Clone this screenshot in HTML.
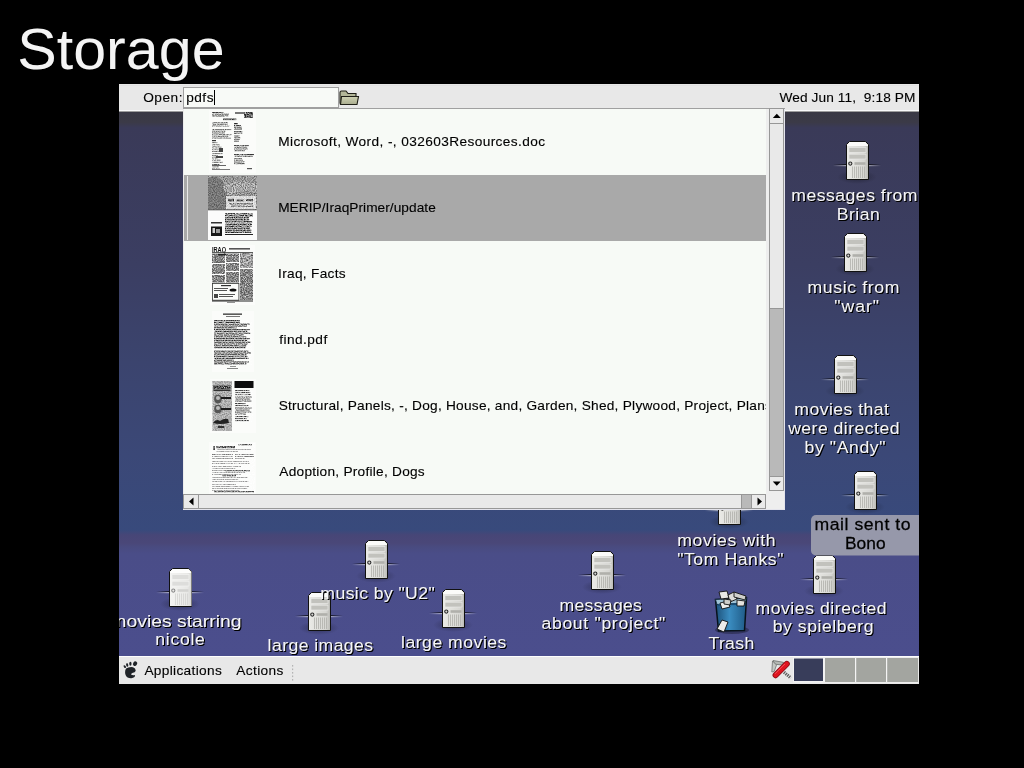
<!DOCTYPE html>
<html><head><meta charset="utf-8"><title>Storage</title>
<style>html,body{margin:0;padding:0;background:#000;width:1024px;height:768px;overflow:hidden}svg{display:block}text{font-family:"Liberation Sans",sans-serif;white-space:pre}</style>
</head><body>
<svg width="1024" height="768" viewBox="0 0 1024 768" font-family="Liberation Sans, sans-serif"><defs>
<linearGradient id="bg" x1="0" y1="112" x2="0" y2="656" gradientUnits="userSpaceOnUse">
 <stop offset="0" stop-color="#3a3945"/>
 <stop offset="0.019" stop-color="#3b3a47"/>
 <stop offset="0.029" stop-color="#3a3a58"/>
 <stop offset="0.28" stop-color="#3b3e62"/>
 <stop offset="0.46" stop-color="#3b446e"/>
 <stop offset="0.63" stop-color="#3b4877"/>
 <stop offset="0.7684" stop-color="#384a7c"/>
 <stop offset="0.7776" stop-color="#474677"/>
 <stop offset="0.7923" stop-color="#4a4778"/>
 <stop offset="0.7996" stop-color="#494b80"/>
 <stop offset="0.8125" stop-color="#4a4d88"/>
 <stop offset="1" stop-color="#4b4e8d"/>
</linearGradient>
<linearGradient id="srvline" x1="0" x2="1" y1="0" y2="0">
 <stop offset="0" stop-color="#fff" stop-opacity="0"/>
 <stop offset="0.4" stop-color="#fff" stop-opacity="0.85"/>
 <stop offset="0.6" stop-color="#fff" stop-opacity="0.85"/>
 <stop offset="1" stop-color="#fff" stop-opacity="0"/>
</linearGradient>
<linearGradient id="srvlined" x1="0" x2="1" y1="0" y2="0">
 <stop offset="0" stop-color="#000" stop-opacity="0"/>
 <stop offset="0.3" stop-color="#000" stop-opacity="0.8"/>
 <stop offset="0.7" stop-color="#000" stop-opacity="0.8"/>
 <stop offset="1" stop-color="#000" stop-opacity="0"/>
</linearGradient>
<linearGradient id="srvbody" x1="0" x2="1" y1="0" y2="0">
 <stop offset="0" stop-color="#ebebe7"/>
 <stop offset="0.8" stop-color="#d6d6d2"/>
 <stop offset="1" stop-color="#b8b8b3"/>
</linearGradient>
<radialGradient id="srvshadow">
 <stop offset="0" stop-color="#000" stop-opacity="0.35"/>
 <stop offset="1" stop-color="#000" stop-opacity="0"/>
</radialGradient>
<g id="srv">
 <ellipse cx="24" cy="36" rx="20" ry="7" fill="url(#srvshadow)"/>
 <rect x="0" y="23" width="48" height="1.1" fill="url(#srvlined)"/>
 <rect x="0" y="24.1" width="48" height="1.1" fill="url(#srvline)"/>
 <path d="M13.5,3.5 L16.5,0.5 L32.5,0.5 L35.5,3.5 L35.5,38.5 L13.5,38.5 Z" fill="url(#srvbody)" stroke="#111" stroke-width="1"/>
 <path d="M14,4 L17,1 L32,1 L35,4 L35,5 L14,5 Z" fill="#fbfbf9"/>
 <rect x="16" y="6.6" width="17" height="4.8" fill="#c2c2bd" stroke="#ecece9" stroke-width="0.6"/>
 <rect x="16" y="13.2" width="17" height="4.8" fill="#c2c2bd" stroke="#ecece9" stroke-width="0.6"/>
 <circle cx="17.3" cy="22.6" r="1.6" fill="#d8d8d4" stroke="#2a2a2a" stroke-width="1.1"/>
 <rect x="21.5" y="21.2" width="11" height="2.6" fill="#b0b0ab"/>
 <g stroke="#b0b0ab" stroke-width="0.8">
  <line x1="19.5" y1="25.5" x2="19.5" y2="37"/><line x1="21.5" y1="25.5" x2="21.5" y2="37"/>
  <line x1="23.5" y1="25.5" x2="23.5" y2="37"/><line x1="25.5" y1="25.5" x2="25.5" y2="37"/>
  <line x1="27.5" y1="25.5" x2="27.5" y2="37"/><line x1="29.5" y1="25.5" x2="29.5" y2="37"/>
  <line x1="31.5" y1="25.5" x2="31.5" y2="37"/>
 </g>
</g>
<filter id="blur" x="-5%" y="-5%" width="110%" height="110%"><feGaussianBlur stdDeviation="0.35"/></filter>
<filter id="mot" x="0" y="0" width="1" height="1" filterUnits="objectBoundingBox" color-interpolation-filters="sRGB">
 <feTurbulence type="fractalNoise" baseFrequency="0.9" numOctaves="1" seed="7" result="n"/>
 <feColorMatrix in="n" type="matrix" values="0 0 0 0 0  0 0 0 0 0  0 0 0 0 0  2.2 0 0 0 -0.85" result="a"/>
 <feComposite in="SourceGraphic" in2="a" operator="in"/>
</filter><filter id="mot2" x="0" y="0" width="1" height="1" filterUnits="objectBoundingBox" color-interpolation-filters="sRGB">
 <feTurbulence type="fractalNoise" baseFrequency="0.6" numOctaves="2" seed="11" result="n"/>
 <feColorMatrix in="n" type="matrix" values="0 0 0 0 0  0 0 0 0 0  0 0 0 0 0  2.2 0 0 0 -0.75" result="a"/>
 <feComposite in="SourceGraphic" in2="a" operator="in"/>
</filter><filter id="mot3" x="0" y="0" width="1" height="1" filterUnits="objectBoundingBox" color-interpolation-filters="sRGB">
 <feTurbulence type="fractalNoise" baseFrequency="0.9" numOctaves="1" seed="5" result="n"/>
 <feColorMatrix in="n" type="matrix" values="0 0 0 0 0  0 0 0 0 0  0 0 0 0 0  2.0 0 0 0 -0.7" result="a"/>
 <feComposite in="SourceGraphic" in2="a" operator="in"/>
</filter>
<filter id="tsh" x="-5%" y="-5%" width="110%" height="110%" color-interpolation-filters="sRGB">
 <feGaussianBlur in="SourceAlpha" stdDeviation="0.6"/>
 <feOffset dx="0.9" dy="0.9"/>
 <feComponentTransfer><feFuncA type="linear" slope="1.2"/></feComponentTransfer>
 <feMerge><feMergeNode/><feMergeNode in="SourceGraphic"/></feMerge>
</filter>
<filter id="gray" x="-0.1" y="-0.3" width="1.2" height="1.6"><feOffset dx="0" dy="0"/></filter>
<linearGradient id="trashg" x1="0" x2="1" y1="0" y2="0">
 <stop offset="0" stop-color="#1c4f78"/><stop offset="0.45" stop-color="#3a8cc0"/><stop offset="1" stop-color="#1f5a86"/>
</linearGradient>
<linearGradient id="foldg" x1="0" x2="0" y1="0" y2="1"><stop offset="0" stop-color="#cfd2b4"/><stop offset="1" stop-color="#a9ac8e"/></linearGradient>
<clipPath id="desk"><rect x="119" y="112" width="800" height="544"/></clipPath>
<clipPath id="listclip"><rect x="184" y="109" width="582" height="385"/></clipPath>
</defs>
<text transform="scale(1.0205,1)" x="16.95" y="69.00" font-size="58" textLength="203.14" lengthAdjust="spacing" fill="#f4f4f4"  filter="url(#gray)">Storage</text>
<rect x="119" y="112" width="800" height="544" fill="url(#bg)"/>
<g clip-path="url(#desk)">
<use href="#srv" x="833" y="141"/>
<use href="#srv" x="831" y="233"/>
<use href="#srv" x="821" y="355"/>
<use href="#srv" x="841" y="471"/>
<use href="#srv" x="705" y="486"/>
<use href="#srv" x="578" y="551"/>
<use href="#srv" x="800" y="555"/>
<use href="#srv" x="156" y="568"/>
<use href="#srv" x="352" y="540"/>
<use href="#srv" x="295" y="592"/>
<use href="#srv" x="429" y="589"/>
<path d="M170,572 L173,569 L189,569 L192,572 L192,606 L170,606 Z" fill="#fff" fill-opacity="0.45"/>
<g transform="translate(708,586)">
 <ellipse cx="24" cy="44" rx="17" ry="4" fill="#000" fill-opacity="0.3"/>
 <path d="M7.5,13.5 L38.5,12 L36.5,44.5 L10.5,45 Z" fill="url(#trashg)" stroke="#08131c" stroke-width="1.5"/>
 <path d="M7.5,13.5 L38.5,12 L37,17 L9,18.5 Z" fill="#9fc3d6" stroke="#0d2438" stroke-width="0.8"/>
 <path d="M10,18 L36,16.5 L36,18.5 L10,20 Z" fill="#1d4f74"/>
 <path d="M11,6 L19,5 L21,12 L13,13 Z" fill="#e9e9e6" stroke="#111" stroke-width="0.9"/>
 <path d="M20,9 L26,6 L29,13 L22,16 Z" fill="#dcdcd8" stroke="#111" stroke-width="0.9"/>
 <path d="M26,6 L38,10 L37,14 L26,11 Z" fill="#d0d0cc" stroke="#111" stroke-width="0.9"/>
 <path d="M12,17 L20,15 L22,21 L14,23 Z" fill="#ececea" stroke="#111" stroke-width="0.9"/>
 <path d="M29,14 L37,15 L36,20 L29,20 Z" fill="#e4e4e0" stroke="#111" stroke-width="0.9"/>
 <path d="M16,13 L23,14 L22,19 L16,18 Z" fill="#cfcfcb" stroke="#111" stroke-width="0.9"/>
 <path d="M9,43 L14,34 L20,36 L16,46 Z" fill="#ececea" stroke="#111" stroke-width="0.9"/>
</g>
<g filter="url(#tsh)">
<text transform="scale(1.0700,1)" x="739.55" y="201.00" font-size="16.5" textLength="117.89" lengthAdjust="spacing" fill="#f6f6f8" stroke="#f6f6f8" stroke-width="0.08" >messages from</text>
<text transform="scale(1.0700,1)" x="782.01" y="219.90" font-size="16.5" textLength="40.18" lengthAdjust="spacing" fill="#f6f6f8" stroke="#f6f6f8" stroke-width="0.08" >Brian</text>
<text transform="scale(1.0700,1)" x="754.60" y="292.80" font-size="16.5" textLength="86.00" lengthAdjust="spacing" fill="#f6f6f8" stroke="#f6f6f8" stroke-width="0.08" >music from</text>
<text transform="scale(1.0700,1)" x="779.58" y="312.20" font-size="16.5" textLength="42.05" lengthAdjust="spacing" fill="#f6f6f8" stroke="#f6f6f8" stroke-width="0.08" >"war"</text>
<text transform="scale(1.0700,1)" x="742.36" y="415.00" font-size="16.5" textLength="88.46" lengthAdjust="spacing" fill="#f6f6f8" stroke="#f6f6f8" stroke-width="0.08" >movies that</text>
<text transform="scale(1.0700,1)" x="736.59" y="433.70" font-size="16.5" textLength="104.04" lengthAdjust="spacing" fill="#f6f6f8" stroke="#f6f6f8" stroke-width="0.08" >were directed</text>
<text transform="scale(1.0700,1)" x="751.94" y="452.80" font-size="16.5" textLength="75.66" lengthAdjust="spacing" fill="#f6f6f8" stroke="#f6f6f8" stroke-width="0.08" >by "Andy"</text>
<text transform="scale(1.0700,1)" x="632.92" y="545.80" font-size="16.5" textLength="92.00" lengthAdjust="spacing" fill="#f6f6f8" stroke="#f6f6f8" stroke-width="0.08" >movies with</text>
<text transform="scale(1.0700,1)" x="632.85" y="564.90" font-size="16.5" textLength="99.33" lengthAdjust="spacing" fill="#f6f6f8" stroke="#f6f6f8" stroke-width="0.08" >"Tom Hanks"</text>
<text transform="scale(1.0700,1)" x="522.83" y="610.80" font-size="16.5" textLength="77.12" lengthAdjust="spacing" fill="#f6f6f8" stroke="#f6f6f8" stroke-width="0.08" >messages</text>
<text transform="scale(1.0700,1)" x="506.03" y="629.50" font-size="16.5" textLength="115.71" lengthAdjust="spacing" fill="#f6f6f8" stroke="#f6f6f8" stroke-width="0.08" >about "project"</text>
<text transform="scale(1.0700,1)" x="706.00" y="613.70" font-size="16.5" textLength="122.57" lengthAdjust="spacing" fill="#f6f6f8" stroke="#f6f6f8" stroke-width="0.08" >movies directed</text>
<text transform="scale(1.0700,1)" x="722.22" y="632.20" font-size="16.5" textLength="94.18" lengthAdjust="spacing" fill="#f6f6f8" stroke="#f6f6f8" stroke-width="0.08" >by spielberg</text>
<text transform="scale(1.0700,1)" x="662.08" y="649.00" font-size="16.5" textLength="42.82" lengthAdjust="spacing" fill="#f6f6f8" stroke="#f6f6f8" stroke-width="0.08" >Trash</text>
<text transform="scale(1.0700,1)" x="299.37" y="599.05" font-size="16.5" textLength="106.93" lengthAdjust="spacing" fill="#f6f6f8" stroke="#f6f6f8" stroke-width="0.08" >music by "U2"</text>
<text transform="scale(1.0700,1)" x="250.11" y="651.10" font-size="16.5" textLength="98.63" lengthAdjust="spacing" fill="#f6f6f8" stroke="#f6f6f8" stroke-width="0.08" >large images</text>
<text transform="scale(1.0700,1)" x="374.79" y="648.00" font-size="16.5" textLength="98.51" lengthAdjust="spacing" fill="#f6f6f8" stroke="#f6f6f8" stroke-width="0.08" >large movies</text>
<text transform="scale(1.0700,1)" x="145.16" y="645.50" font-size="16.5" textLength="46.30" lengthAdjust="spacing" fill="#f6f6f8" stroke="#f6f6f8" stroke-width="0.08" >nicole</text>
<text x="110.37" y="626.8" font-size="16.5" textLength="131.08" lengthAdjust="spacingAndGlyphs" fill="#f6f6f8" stroke="#f6f6f8" stroke-width="0.08">movies starring</text>
</g>
<rect x="811" y="515" width="112" height="40.5" rx="5" fill="#9698aa"/>
<text transform="scale(1.0700,1)" x="761.14" y="530.10" font-size="16.5" textLength="89.90" lengthAdjust="spacing" fill="#000" stroke="#000" stroke-width="0.25" filter="url(#gray)">mail sent to</text>
<text transform="scale(1.0521,1)" x="803.17" y="548.60" font-size="16.5" textLength="38.54" lengthAdjust="spacing" fill="#000" stroke="#000" stroke-width="0.25" filter="url(#gray)">Bono</text>
</g>
<rect x="119" y="84" width="800" height="28" fill="#e8e8e8"/>
<rect x="119" y="85" width="800" height="1" fill="#e2e2e2"/>
<rect x="119" y="110" width="800" height="1" fill="#fafafa"/>
<rect x="119" y="111" width="800" height="1" fill="#9d9d9d"/>
<text transform="scale(1.0700,1)" x="133.79" y="101.70" font-size="12.8" textLength="36.72" lengthAdjust="spacing" fill="#000" stroke="#000" stroke-width="0.12"  filter="url(#gray)">Open:</text>
<rect x="183.5" y="87.5" width="155" height="20" fill="#f8faf7" stroke="#a0a0a0"/>
<text transform="scale(1.0700,1)" x="173.97" y="101.70" font-size="12.8" textLength="25.54" lengthAdjust="spacing" fill="#000" stroke="#000" stroke-width="0.12"  filter="url(#gray)">pdfs</text>
<rect x="214" y="90" width="1" height="15" fill="#000"/>
<g transform="translate(339,90)">
 <path d="M1,2.5 Q1,1 2.5,1 L7,1 L9,3.5 L17,3.5 L17,14 L2,14 Q1,14 1,13 Z" fill="#b3b698" stroke="#1e1e16" stroke-width="1.1"/>
 <path d="M2.5,6.5 L19.5,6.5 L18,14.5 L1.5,14.5 Z" fill="url(#foldg)" stroke="#1e1e16" stroke-width="1.1"/>
</g>
<text transform="scale(1.0700,1)" x="728.45" y="101.90" font-size="12.8" textLength="127.04" lengthAdjust="spacing" fill="#000" stroke="#000" stroke-width="0.12"  filter="url(#gray)">Wed Jun 11,  9:18 PM</text>
<rect x="119" y="656" width="800" height="28" fill="#e8e8e8"/>
<rect x="119" y="656" width="800" height="1" fill="#fdfdfd"/>
<text transform="scale(1.0700,1)" x="134.95" y="674.80" font-size="12.8" textLength="72.34" lengthAdjust="spacing" fill="#000" stroke="#000" stroke-width="0.12"  filter="url(#gray)">Applications</text>
<text transform="scale(1.0700,1)" x="220.75" y="674.80" font-size="12.8" textLength="44.16" lengthAdjust="spacing" fill="#000" stroke="#000" stroke-width="0.12"  filter="url(#gray)">Actions</text>
<g fill="#b4b4b4"><rect x="292" y="665" width="1.2" height="1.6"/><rect x="292" y="668.5" width="1.2" height="1.6"/><rect x="292" y="672" width="1.2" height="1.6"/><rect x="292" y="675.5" width="1.2" height="1.6"/><rect x="292" y="679" width="1.2" height="1.6"/></g>
<g fill="#1f2328">
 <ellipse cx="124.8" cy="666.6" rx="0.95" ry="1.6" transform="rotate(-35 124.8 666.6)"/>
 <ellipse cx="127.2" cy="664.9" rx="1.05" ry="1.8" transform="rotate(-15 127.2 664.9)"/>
 <ellipse cx="130.4" cy="663.8" rx="1.15" ry="2.0"/>
 <ellipse cx="135.1" cy="663.7" rx="2.0" ry="2.4" transform="rotate(35 135.1 663.7)"/>
 <path d="M126,668.6 Q129,666.6 133,667.2 Q136,668.2 135.6,671 Q135,672.6 133,672.8 Q131.6,673 131,674.6 Q132.6,675.6 135,675 Q135.4,677.6 131.4,678.2 Q127,678.4 125.6,675 Q124.4,671.6 126,668.6 Z"/>
</g>
<path d="M773,660.5 L783.5,662.3 L782.5,665 L774.5,664.2 Z" fill="#b4b8b4" stroke="#5e625e" stroke-width="0.7"/>
<path d="M772.5,661 L771.8,672 L774.2,671.5 L776.5,665 Z" fill="#c4c8c4" stroke="#666" stroke-width="0.7"/>
<path d="M784,672.2 L790.8,678" stroke="#5a5a5a" stroke-width="3.2" stroke-dasharray="1.3 0.9"/>
<path d="M775.6,675.2 L786.8,663.9" stroke="#8a0c14" stroke-width="6" stroke-linecap="round"/>
<path d="M775.6,675.2 L786.8,663.9" stroke="#e0141f" stroke-width="4.4" stroke-linecap="round"/>
<path d="M775.2,673.6 L784.6,664.2" stroke="#ff6a74" stroke-width="1" stroke-linecap="round" stroke-opacity="0.7"/>
<rect x="793" y="657.5" width="125" height="25" fill="#f2f2f2"/>
<rect x="794" y="658.5" width="29" height="22.5" fill="#383d5a"/>
<rect x="825" y="658" width="93" height="24" fill="#a3a5a0"/>
<rect x="855" y="658" width="1.2" height="24" fill="#f4f4f4"/><rect x="886" y="658" width="1.2" height="24" fill="#f4f4f4"/>
<rect x="183" y="108" width="602" height="402" fill="#f7faf6" stroke="none"/>
<rect x="183" y="108" width="602" height="1" fill="#a0a0a0"/><rect x="183" y="109" width="1" height="401" fill="#ececec"/><rect x="784" y="109" width="1" height="401" fill="#e4e4ec"/><rect x="183" y="509" width="602" height="1" fill="#e4e4ec"/>
<rect x="184" y="175" width="582" height="66" fill="#a9a9a9"/>
<rect x="187" y="176" width="1" height="64" fill="#e8e8e8"/>
<g clip-path="url(#listclip)">
<text transform="scale(1.0700,1)" x="259.98" y="146.00" font-size="12.8" textLength="249.44" lengthAdjust="spacing" fill="#000" stroke="#000" stroke-width="0.12"  filter="url(#gray)">Microsoft, Word, -, 032603Resources.doc</text>
<text transform="scale(1.0700,1)" x="259.98" y="212.00" font-size="12.8" textLength="147.29" lengthAdjust="spacing" fill="#000" stroke="#000" stroke-width="0.12"  filter="url(#gray)">MERIP/IraqPrimer/update</text>
<text transform="scale(1.0700,1)" x="259.88" y="278.00" font-size="12.8" textLength="63.20" lengthAdjust="spacing" fill="#000" stroke="#000" stroke-width="0.12"  filter="url(#gray)">Iraq, Facts</text>
<text transform="scale(1.0700,1)" x="260.88" y="344.00" font-size="12.8" textLength="44.95" lengthAdjust="spacing" fill="#000" stroke="#000" stroke-width="0.12"  filter="url(#gray)">find.pdf</text>
<text transform="scale(1.0700,1)" x="260.43" y="410.00" font-size="12.8" textLength="460.93" lengthAdjust="spacing" fill="#000" stroke="#000" stroke-width="0.12"  filter="url(#gray)">Structural, Panels, -, Dog, House, and, Garden, Shed, Plywood, Project, Plans</text>
<text transform="scale(1.0700,1)" x="261.03" y="476.00" font-size="12.8" textLength="135.89" lengthAdjust="spacing" fill="#000" stroke="#000" stroke-width="0.12"  filter="url(#gray)">Adoption, Profile, Dogs</text>
<g filter="url(#blur)"><rect x="209.0" y="110.0" width="47.0" height="63.0" fill="#fbfcfa"/>
<rect x="212.0" y="112.0" width="11.8" height="1.1" fill="#333"/>
<rect x="212.0" y="113.7" width="16.9" height="1.1" fill="#333"/>
<rect x="212.0" y="115.4" width="16.3" height="1.1" fill="#333"/>
<rect x="212.0" y="112.0" width="18.0" height="5.5" fill="#fbfcfa" filter="url(#mot3)"/>
<rect x="235.0" y="112.0" width="10.0" height="2.0" fill="#777"/>
<rect x="244.0" y="112.0" width="9.0" height="6.0" fill="#222"/>
<rect x="244.0" y="112.0" width="9.0" height="6.0" fill="#fff" filter="url(#mot3)"/>
<rect x="223.0" y="118.5" width="13.3" height="1.6" fill="#222"/>
<rect x="223.0" y="118.5" width="19.0" height="2.0" fill="#fbfcfa" filter="url(#mot3)"/>
<rect x="212.0" y="122.0" width="16.0" height="1.1" fill="#555"/>
<rect x="212.0" y="123.7" width="15.6" height="1.1" fill="#555"/>
<rect x="212.0" y="125.4" width="17.2" height="1.1" fill="#555"/>
<rect x="212.0" y="122.0" width="20.0" height="5.0" fill="#fbfcfa" filter="url(#mot3)"/>
<rect x="212.0" y="129.0" width="19.2" height="1.1" fill="#555"/>
<rect x="212.0" y="130.7" width="13.4" height="1.1" fill="#555"/>
<rect x="212.0" y="132.4" width="12.8" height="1.1" fill="#555"/>
<rect x="212.0" y="134.1" width="19.6" height="1.1" fill="#555"/>
<rect x="212.0" y="135.8" width="16.2" height="1.1" fill="#555"/>
<rect x="212.0" y="137.5" width="19.0" height="1.1" fill="#555"/>
<rect x="212.0" y="129.0" width="21.0" height="10.0" fill="#fbfcfa" filter="url(#mot3)"/>
<rect x="212.0" y="140.0" width="4.0" height="1.2" fill="#333"/>
<rect x="212.0" y="142.0" width="5.5" height="1.1" fill="#555"/>
<rect x="212.0" y="144.2" width="7.9" height="1.1" fill="#555"/>
<rect x="212.0" y="146.4" width="9.5" height="1.1" fill="#555"/>
<rect x="212.0" y="148.6" width="6.8" height="1.1" fill="#555"/>
<rect x="212.0" y="150.8" width="10.7" height="1.1" fill="#555"/>
<rect x="212.0" y="153.0" width="10.5" height="1.1" fill="#555"/>
<rect x="212.0" y="155.2" width="5.7" height="1.1" fill="#555"/>
<rect x="212.0" y="157.4" width="5.6" height="1.1" fill="#555"/>
<rect x="212.0" y="159.6" width="8.5" height="1.1" fill="#555"/>
<rect x="212.0" y="161.8" width="10.7" height="1.1" fill="#555"/>
<rect x="212.0" y="164.0" width="7.6" height="1.1" fill="#555"/>
<rect x="212.0" y="166.2" width="6.7" height="1.1" fill="#555"/>
<rect x="212.0" y="168.4" width="7.8" height="1.1" fill="#555"/>
<rect x="212.0" y="142.0" width="11.0" height="28.0" fill="#fbfcfa" filter="url(#mot3)"/>
<rect x="219.0" y="148.0" width="4.0" height="4.0" fill="#444"/>
<rect x="216.0" y="156.0" width="7.0" height="2.0" fill="#444"/>
<rect x="212.0" y="165.0" width="14.0" height="1.0" fill="#666"/>
<rect x="212.0" y="169.0" width="18.0" height="1.0" fill="#777"/>
<rect x="234.0" y="123.0" width="3.7" height="1.3" fill="#222"/>
<rect x="234.0" y="123.0" width="6.0" height="1.5" fill="#fbfcfa" filter="url(#mot3)"/>
<rect x="234.0" y="125.0" width="6.9" height="1.1" fill="#333"/>
<rect x="234.0" y="126.7" width="7.8" height="1.1" fill="#333"/>
<rect x="234.0" y="128.4" width="8.0" height="1.1" fill="#333"/>
<rect x="234.0" y="125.0" width="10.0" height="4.0" fill="#fbfcfa" filter="url(#mot3)"/>
<rect x="234.0" y="131.0" width="8.3" height="1.1" fill="#333"/>
<rect x="234.0" y="132.7" width="8.3" height="1.1" fill="#333"/>
<rect x="234.0" y="131.0" width="12.0" height="3.0" fill="#fbfcfa" filter="url(#mot3)"/>
<rect x="234.0" y="135.5" width="5.5" height="1.1" fill="#444"/>
<rect x="234.0" y="137.2" width="6.3" height="1.1" fill="#444"/>
<rect x="234.0" y="138.9" width="5.7" height="1.1" fill="#444"/>
<rect x="234.0" y="140.6" width="4.9" height="1.1" fill="#444"/>
<rect x="234.0" y="135.5" width="8.0" height="6.0" fill="#fbfcfa" filter="url(#mot3)"/>
<rect x="234.0" y="145.0" width="15.0" height="1.1" fill="#444"/>
<rect x="234.0" y="146.7" width="13.2" height="1.1" fill="#444"/>
<rect x="234.0" y="148.4" width="13.7" height="1.1" fill="#444"/>
<rect x="234.0" y="150.1" width="10.8" height="1.1" fill="#444"/>
<rect x="234.0" y="145.0" width="16.0" height="7.0" fill="#fbfcfa" filter="url(#mot3)"/>
<rect x="234.0" y="154.0" width="19.9" height="1.1" fill="#333"/>
<rect x="234.0" y="155.7" width="18.9" height="1.1" fill="#333"/>
<rect x="234.0" y="154.0" width="20.0" height="3.0" fill="#fbfcfa" filter="url(#mot3)"/>
<rect x="234.0" y="158.0" width="7.8" height="1.1" fill="#444"/>
<rect x="234.0" y="159.7" width="8.8" height="1.1" fill="#444"/>
<rect x="234.0" y="161.4" width="10.7" height="1.1" fill="#444"/>
<rect x="234.0" y="163.1" width="10.6" height="1.1" fill="#444"/>
<rect x="234.0" y="158.0" width="12.0" height="7.0" fill="#fbfcfa" filter="url(#mot3)"/>
<rect x="247.0" y="168.0" width="5.0" height="1.2" fill="#555"/>
<rect x="208.0" y="176.0" width="49.0" height="64.0" fill="#fbfbfb"/>
<rect x="208.0" y="176.0" width="49.0" height="34.0" fill="#b8b8b8"/>
<path d="M208,178 L214,176 L222,180 L230,196 L226,210 L208,210 Z" fill="#8e8e8e"/>
<path d="M222,186 Q236,178 257,184 L257,192 Q240,188 228,196 Z" fill="#d0d0d0"/>
<rect x="208.0" y="176.0" width="49.0" height="34.0" fill="#444" filter="url(#mot3)"/>
<rect x="226.0" y="196.0" width="30.0" height="13.0" fill="#cdcdcd"/>
<rect x="228.0" y="198.8" width="6.0" height="2.6" fill="#1a1a1a"/>
<rect x="236.0" y="199.5" width="8.0" height="1.8" fill="#222"/>
<rect x="246.0" y="199.0" width="7.0" height="2.2" fill="#222"/>
<rect x="229.0" y="203.2" width="24.0" height="1.3" fill="#444"/>
<rect x="231.0" y="205.6" width="22.0" height="1.3" fill="#555"/>
<rect x="226.0" y="196.0" width="30.0" height="13.0" fill="#fff" filter="url(#mot3)"/>
<rect x="208.0" y="209.5" width="49.0" height="0.8" fill="#555"/>
<rect x="225.0" y="213.0" width="27.8" height="1.5" fill="#1a1a1a"/>
<rect x="225.0" y="215.0" width="27.8" height="1.5" fill="#1a1a1a"/>
<rect x="225.0" y="217.0" width="24.0" height="1.5" fill="#1a1a1a"/>
<rect x="225.0" y="219.0" width="24.2" height="1.5" fill="#1a1a1a"/>
<rect x="225.0" y="221.0" width="27.3" height="1.5" fill="#1a1a1a"/>
<rect x="225.0" y="223.5" width="26.9" height="1.5" fill="#1a1a1a"/>
<rect x="225.0" y="225.5" width="26.6" height="1.5" fill="#1a1a1a"/>
<rect x="225.0" y="227.5" width="25.1" height="1.5" fill="#1a1a1a"/>
<rect x="225.0" y="229.5" width="26.3" height="1.5" fill="#1a1a1a"/>
<rect x="225.0" y="231.5" width="26.3" height="1.5" fill="#1a1a1a"/>
<rect x="225.0" y="213.0" width="28.0" height="20.0" fill="#fff" filter="url(#mot3)"/>
<rect x="225.0" y="234.0" width="28.0" height="1.0" fill="#222"/>
<rect x="211.0" y="222.0" width="11.0" height="1.5" fill="#333"/>
<rect x="211.0" y="226.5" width="11.0" height="9.5" fill="#151515"/>
<rect x="212.5" y="228.0" width="2.5" height="5.0" fill="#cfcfcf"/>
<rect x="216.0" y="229.0" width="4.0" height="4.0" fill="#999"/>
<rect x="210.0" y="245.0" width="45.0" height="60.0" fill="#fbfcfa"/>
<text x="212" y="251.6" font-size="7" font-weight="bold" textLength="14" lengthAdjust="spacingAndGlyphs" fill="#111">IRAQ</text>
<rect x="229.0" y="248.0" width="21.0" height="1.6" fill="#555"/>
<rect x="212.0" y="252.0" width="41.0" height="0.8" fill="#333"/>
<rect x="212.0" y="253.5" width="13.0" height="29.0" fill="#5a5a5a"/>
<rect x="226.0" y="253.5" width="13.0" height="29.0" fill="#5a5a5a"/>
<rect x="240.0" y="269.0" width="13.0" height="31.0" fill="#5a5a5a"/>
<rect x="212.0" y="253.5" width="13.0" height="29.0" fill="#fff" filter="url(#mot)"/>
<rect x="226.0" y="253.5" width="13.0" height="29.0" fill="#fff" filter="url(#mot)"/>
<rect x="240.0" y="269.0" width="13.0" height="31.0" fill="#fff" filter="url(#mot)"/>
<rect x="218.0" y="254.0" width="8.0" height="1.3" fill="#222"/>
<rect x="212.0" y="263.0" width="13.0" height="1.0" fill="#fff"/>
<rect x="226.0" y="262.0" width="13.0" height="1.0" fill="#fff"/>
<rect x="226.0" y="271.0" width="13.0" height="1.0" fill="#fff"/>
<rect x="212.0" y="274.0" width="13.0" height="1.0" fill="#fff"/>
<rect x="240.0" y="253.0" width="13.0" height="15.0" fill="#d0d0d0"/>
<rect x="240.0" y="253.0" width="13.0" height="15.0" fill="#444" filter="url(#mot2)"/>
<rect x="212.0" y="283.0" width="27.0" height="0.8" fill="#333"/>
<rect x="212.0" y="299.8" width="27.0" height="0.8" fill="#333"/>
<rect x="212.0" y="283.0" width="0.8" height="17.0" fill="#333"/>
<rect x="238.5" y="283.0" width="0.8" height="17.0" fill="#333"/>
<rect x="221.0" y="285.0" width="10.0" height="1.2" fill="#333"/>
<rect x="214.0" y="288.0" width="14.0" height="1.0" fill="#555"/>
<rect x="214.0" y="290.0" width="13.0" height="1.0" fill="#555"/>
<rect x="214.0" y="294.0" width="4.0" height="4.0" fill="#444"/>
<rect x="219.0" y="294.0" width="16.0" height="1.0" fill="#555"/>
<rect x="219.0" y="296.0" width="14.0" height="1.0" fill="#555"/>
<ellipse cx="233" cy="290" rx="3.5" ry="1.6" fill="#111"/>
<rect x="212.0" y="300.5" width="41.0" height="1.0" fill="#222"/>
<rect x="227.0" y="302.0" width="8.0" height="0.8" fill="#777"/>
<rect x="212.0" y="311.0" width="42.0" height="61.0" fill="#fbfcfa"/>
<rect x="223.0" y="313.5" width="19.0" height="1.3" fill="#333"/>
<rect x="226.0" y="316.0" width="14.0" height="1.0" fill="#777"/>
<rect x="214.0" y="320.0" width="25.8" height="1.2" fill="#2a2a2a"/>
<rect x="214.0" y="321.8" width="25.9" height="1.2" fill="#2a2a2a"/>
<rect x="214.0" y="323.6" width="35.7" height="1.2" fill="#2a2a2a"/>
<rect x="214.0" y="325.4" width="33.0" height="1.2" fill="#2a2a2a"/>
<rect x="214.0" y="327.2" width="22.5" height="1.2" fill="#2a2a2a"/>
<rect x="214.0" y="329.0" width="35.9" height="1.2" fill="#2a2a2a"/>
<rect x="214.0" y="330.8" width="33.2" height="1.2" fill="#2a2a2a"/>
<rect x="214.0" y="332.6" width="36.2" height="1.2" fill="#2a2a2a"/>
<rect x="214.0" y="334.4" width="29.7" height="1.2" fill="#2a2a2a"/>
<rect x="214.0" y="336.2" width="32.4" height="1.2" fill="#2a2a2a"/>
<rect x="214.0" y="338.0" width="35.8" height="1.2" fill="#2a2a2a"/>
<rect x="214.0" y="339.8" width="33.1" height="1.2" fill="#2a2a2a"/>
<rect x="214.0" y="341.6" width="36.3" height="1.2" fill="#2a2a2a"/>
<rect x="214.0" y="343.4" width="33.7" height="1.2" fill="#2a2a2a"/>
<rect x="214.0" y="345.2" width="32.3" height="1.2" fill="#2a2a2a"/>
<rect x="214.0" y="347.0" width="31.7" height="1.2" fill="#2a2a2a"/>
<rect x="214.0" y="350.6" width="34.4" height="1.2" fill="#2a2a2a"/>
<rect x="214.0" y="352.4" width="37.0" height="1.2" fill="#2a2a2a"/>
<rect x="214.0" y="354.2" width="32.6" height="1.2" fill="#2a2a2a"/>
<rect x="214.0" y="356.0" width="33.4" height="1.2" fill="#2a2a2a"/>
<rect x="214.0" y="357.8" width="34.5" height="1.2" fill="#2a2a2a"/>
<rect x="214.0" y="359.6" width="19.6" height="1.2" fill="#2a2a2a"/>
<rect x="214.0" y="361.4" width="34.9" height="1.2" fill="#2a2a2a"/>
<rect x="214.0" y="363.2" width="32.4" height="1.2" fill="#2a2a2a"/>
<rect x="214.0" y="320.0" width="38.0" height="45.0" fill="#fff" filter="url(#mot)"/>
<rect x="230.0" y="366.0" width="6.0" height="0.8" fill="#777"/>
<rect x="227.0" y="368.0" width="11.0" height="0.8" fill="#666"/>
<rect x="210.0" y="379.0" width="46.0" height="54.0" fill="#fbfcfa"/>
<rect x="212.5" y="381.0" width="19.5" height="50.0" fill="#c8c8c8"/>
<rect x="212.5" y="381.0" width="19.5" height="50.0" fill="#777" filter="url(#mot3)"/>
<rect x="213.5" y="385.5" width="17.0" height="3.5" fill="#1a1a1a"/>
<rect x="213.5" y="385.5" width="17.0" height="3.5" fill="#fff" filter="url(#mot)"/>
<rect x="213.5" y="389.5" width="17.0" height="1.5" fill="#333"/>
<ellipse cx="218" cy="399" rx="3.8" ry="4.2" fill="#555"/>
<ellipse cx="218" cy="398" rx="2" ry="2" fill="#bbb"/>
<rect x="221.0" y="397.0" width="10.0" height="2.0" fill="#1a1a1a"/>
<ellipse cx="218" cy="409" rx="3.8" ry="4.2" fill="#555"/>
<ellipse cx="218" cy="408" rx="2" ry="2" fill="#bbb"/>
<rect x="221.0" y="408.0" width="10.0" height="2.0" fill="#1a1a1a"/>
<path d="M213,423 Q216,418 220,421 Q224,418 228,419 L229,423 Q220,425 213,423 Z" fill="#222"/>
<rect x="218.0" y="426.0" width="6.0" height="2.0" fill="#333"/>
<rect x="234.5" y="381.0" width="19.0" height="7.0" fill="#0a0a0a"/>
<rect x="235.0" y="390.0" width="14.4" height="1.1" fill="#333"/>
<rect x="235.0" y="392.0" width="15.2" height="1.1" fill="#333"/>
<rect x="235.0" y="394.0" width="15.6" height="1.1" fill="#333"/>
<rect x="235.0" y="396.5" width="16.6" height="1.1" fill="#333"/>
<rect x="235.0" y="398.5" width="15.2" height="1.1" fill="#333"/>
<rect x="235.0" y="400.5" width="16.5" height="1.1" fill="#333"/>
<rect x="235.0" y="403.0" width="10.4" height="1.1" fill="#333"/>
<rect x="235.0" y="405.0" width="13.4" height="1.1" fill="#333"/>
<rect x="235.0" y="407.5" width="16.6" height="1.1" fill="#333"/>
<rect x="235.0" y="409.5" width="14.6" height="1.1" fill="#333"/>
<rect x="235.0" y="411.5" width="16.3" height="1.1" fill="#333"/>
<rect x="235.0" y="413.5" width="11.0" height="1.1" fill="#333"/>
<rect x="235.0" y="416.0" width="13.4" height="1.1" fill="#333"/>
<rect x="235.0" y="418.0" width="11.9" height="1.1" fill="#333"/>
<rect x="235.0" y="420.0" width="13.9" height="1.1" fill="#333"/>
<rect x="235.0" y="390.0" width="18.0" height="32.0" fill="#fff" filter="url(#mot3)"/>
<rect x="209.0" y="442.0" width="47.0" height="53.0" fill="#fbfcfa"/>
<rect x="238.0" y="444.0" width="14.0" height="1.3" fill="#444"/>
<rect x="213.0" y="446.0" width="2.0" height="4.0" fill="#333"/>
<rect x="216.0" y="446.0" width="19.0" height="2.2" fill="#333"/>
<rect x="217.0" y="449.0" width="34.0" height="0.9" fill="#888"/>
<rect x="216.0" y="451.0" width="22.0" height="0.9" fill="#888"/>
<rect x="212.0" y="454.0" width="21.0" height="0.9" fill="#666"/>
<rect x="235.0" y="454.0" width="19.0" height="0.9" fill="#666"/>
<rect x="212.0" y="456.0" width="21.0" height="0.9" fill="#777"/>
<rect x="235.0" y="456.0" width="19.0" height="0.9" fill="#666"/>
<rect x="212.0" y="458.0" width="21.0" height="0.9" fill="#777"/>
<rect x="235.0" y="458.0" width="10.0" height="0.9" fill="#888"/>
<rect x="212.0" y="461.0" width="36.8" height="0.9" fill="#888"/>
<rect x="212.0" y="463.0" width="37.5" height="0.9" fill="#888"/>
<rect x="212.0" y="466.0" width="29.0" height="0.9" fill="#888"/>
<rect x="212.0" y="468.0" width="23.4" height="0.9" fill="#888"/>
<rect x="212.0" y="470.0" width="16.8" height="0.9" fill="#888"/>
<rect x="212.0" y="472.0" width="33.5" height="0.9" fill="#888"/>
<rect x="212.0" y="474.0" width="28.7" height="0.9" fill="#888"/>
<rect x="212.0" y="477.0" width="35.9" height="0.9" fill="#888"/>
<rect x="212.0" y="479.0" width="26.2" height="0.9" fill="#888"/>
<rect x="212.0" y="481.0" width="36.2" height="0.9" fill="#888"/>
<rect x="212.0" y="484.0" width="23.7" height="0.9" fill="#888"/>
<rect x="212.0" y="486.0" width="37.0" height="0.9" fill="#888"/>
<rect x="212.0" y="488.0" width="35.2" height="0.9" fill="#888"/>
<rect x="212.0" y="490.0" width="27.2" height="0.9" fill="#888"/>
<rect x="225.0" y="470.0" width="25.0" height="1.3" fill="#444"/>
<rect x="222.0" y="475.0" width="14.0" height="1.3" fill="#444"/>
<rect x="214.0" y="491.0" width="40.0" height="1.3" fill="#444"/>
<rect x="211.0" y="443.0" width="44.0" height="50.0" fill="#fff" filter="url(#mot3)"/></g>
</g>
<rect x="766" y="109" width="18" height="400" fill="#eeeeee"/>
<rect x="184" y="494" width="600" height="15" fill="#eeeeee"/>
<rect x="769.5" y="108.5" width="14" height="382" fill="#b9b9b9" stroke="#979797"/>
<rect x="770" y="124" width="13" height="184" fill="#e9e9e9"/><rect x="770" y="308" width="13" height="1" fill="#979797"/>
<rect x="770" y="109" width="13" height="14" fill="#eaeaea"/><rect x="770" y="123" width="13" height="1" fill="#979797"/>
<path d="M772.8,118 L780.8,118 L776.8,113.8 Z" fill="#000"/>
<rect x="770" y="476" width="13" height="1" fill="#979797"/><rect x="770" y="477" width="13" height="13" fill="#eaeaea"/>
<path d="M772.8,481.5 L780.8,481.5 L776.8,485.7 Z" fill="#000"/>
<rect x="183.5" y="494.5" width="582" height="14" fill="#b9b9b9" stroke="#979797"/>
<rect x="199" y="495" width="542" height="13" fill="#e9e9e9"/><rect x="741" y="495" width="1" height="13" fill="#979797"/>
<rect x="184" y="495" width="14" height="13" fill="#eaeaea"/><rect x="198" y="495" width="1" height="13" fill="#979797"/>
<path d="M193.5,497.5 L193.5,505.5 L189,501.5 Z" fill="#000"/>
<rect x="751" y="495" width="1" height="13" fill="#979797"/><rect x="752" y="495" width="13" height="13" fill="#eaeaea"/>
<path d="M757.5,497.5 L757.5,505.5 L762,501.5 Z" fill="#000"/></svg>
</body></html>
